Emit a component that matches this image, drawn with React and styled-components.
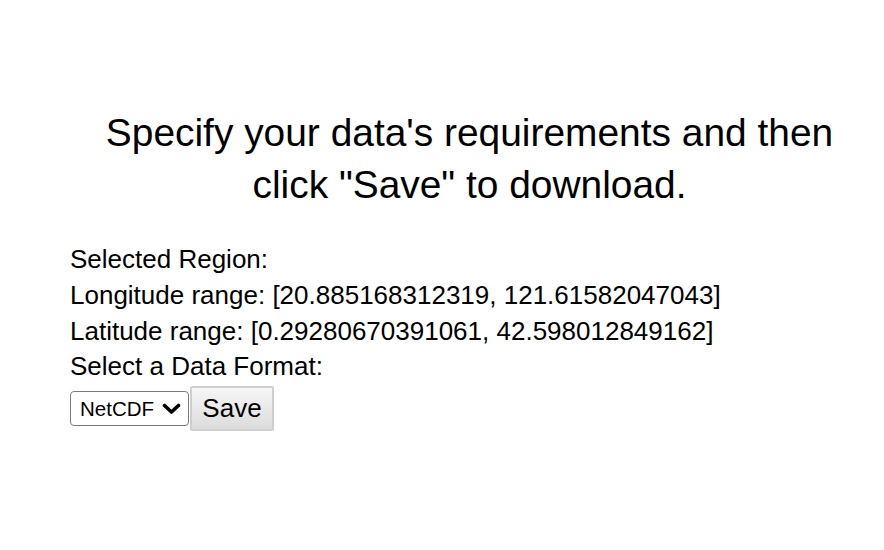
import styled, { createGlobalStyle } from "styled-components";

const GlobalStyle = createGlobalStyle`
  html, body {
    margin: 0;
    padding: 0;
    background: #fff;
  }
  body {
    font-family: "Liberation Sans", Arial, sans-serif;
    color: #000;
  }
`;

const Page = styled.div`
  padding: 107px 15px 0 70px;
`;

const Heading = styled.h1`
  margin: 0 0 31px;
  font-size: 38.9px;
  font-weight: normal;
  line-height: 52px;
  text-align: center;
`;

const Line = styled.div`
  font-size: 26px;
  line-height: 35.8px;
`;

const Controls = styled.div`
  display: flex;
  align-items: center;
  margin-top: 1px;
`;

const SelectWrap = styled.div`
  position: relative;
  display: flex;
`;

const Select = styled.select`
  appearance: none;
  font-family: "Liberation Sans", Arial, sans-serif;
  font-size: 20.5px;
  height: 35px;
  width: 119px;
  padding: 0 0 0 9px;
  border: 1.5px solid #7a7a7a;
  border-radius: 4px;
  background: #fff;
  color: #000;
  outline: none;
`;

const Chevron = styled.svg`
  position: absolute;
  right: 8px;
  top: 12px;
  pointer-events: none;
`;

const Button = styled.button`
  font-family: "Liberation Sans", Arial, sans-serif;
  font-size: 26px;
  height: 45px;
  width: 84px;
  padding: 0;
  margin-left: 1px;
  border: 2px solid #cfcfcf;
  border-radius: 2px;
  background: linear-gradient(#f6f6f6, #dcdcdc);
  color: #000;
`;

export default function App() {
  return (
    <>
      <GlobalStyle />
      <Page>
        <Heading>
          Specify your data's requirements and then click "Save" to download.
        </Heading>
        <Line>Selected Region:</Line>
        <Line>Longitude range: [20.885168312319, 121.61582047043]</Line>
        <Line>Latitude range: [0.29280670391061, 42.598012849162]</Line>
        <Line>Select a Data Format:</Line>
        <Controls>
          <SelectWrap>
            <Select defaultValue="NetCDF">
              <option value="NetCDF">NetCDF</option>
              <option value="CSV">CSV</option>
            </Select>
            <Chevron width="19" height="12" viewBox="0 0 19 12">
              <path
                d="M2.5 2.5 L9.5 9 L16.5 2.5"
                fill="none"
                stroke="#000"
                strokeWidth="3.6"
                strokeLinecap="round"
                strokeLinejoin="round"
              />
            </Chevron>
          </SelectWrap>
          <Button>Save</Button>
        </Controls>
      </Page>
    </>
  );
}
